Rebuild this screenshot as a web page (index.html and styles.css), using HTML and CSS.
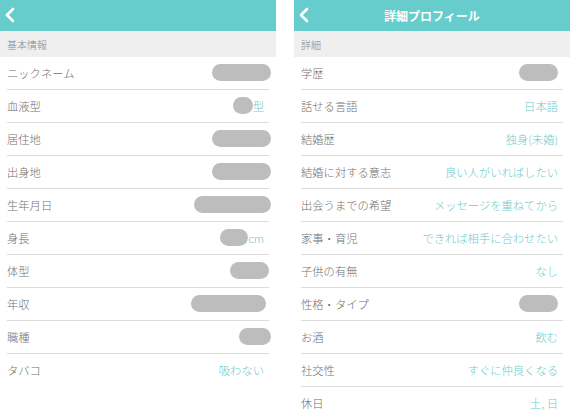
FILE: index.html
```html
<!DOCTYPE html>
<html lang="ja">
<head>
<meta charset="utf-8">
<link rel="stylesheet" href="styles.css">
</head>
<body>
<div class="screens">
  <section class="panel">
    <header class="bar">
      <svg class="back" width="12" height="16" viewBox="0 0 12 16"><polyline points="9,2 3,8 9,14" fill="none" stroke="#fff" stroke-width="2.6" stroke-linecap="round" stroke-linejoin="round"/></svg>
    </header>
    <div class="section">基本情報</div>
    <ul class="list">
      <li class="row"><span class="label">ニックネーム</span><span class="value"><i class="pill out" style="width:59px"></i></span></li>
      <li class="row"><span class="label">血液型</span><span class="value"><i class="pill" style="width:20px"></i>型</span></li>
      <li class="row"><span class="label">居住地</span><span class="value"><i class="pill out" style="width:59px"></i></span></li>
      <li class="row"><span class="label">出身地</span><span class="value"><i class="pill out" style="width:59px"></i></span></li>
      <li class="row"><span class="label">生年月日</span><span class="value"><i class="pill out" style="width:77px"></i></span></li>
      <li class="row"><span class="label">身長</span><span class="value"><i class="pill" style="width:28px"></i>cm</span></li>
      <li class="row"><span class="label">体型</span><span class="value"><i class="pill out4" style="width:39px"></i></span></li>
      <li class="row"><span class="label">年収</span><span class="value"><i class="pill out2" style="width:75px"></i></span></li>
      <li class="row"><span class="label">職種</span><span class="value"><i class="pill out" style="width:32px"></i></span></li>
      <li class="row"><span class="label">タバコ</span><span class="value">吸わない</span></li>
    </ul>
  </section>
  <section class="panel">
    <header class="bar">
      <svg class="back" width="12" height="16" viewBox="0 0 12 16"><polyline points="9,2 3,8 9,14" fill="none" stroke="#fff" stroke-width="2.6" stroke-linecap="round" stroke-linejoin="round"/></svg>
      <h1 class="title">詳細プロフィール</h1>
    </header>
    <div class="section">詳細</div>
    <ul class="list">
      <li class="row"><span class="label">学歴</span><span class="value"><i class="pill" style="width:39px"></i></span></li>
      <li class="row"><span class="label">話せる言語</span><span class="value">日本語</span></li>
      <li class="row"><span class="label">結婚歴</span><span class="value">独身(未婚)</span></li>
      <li class="row"><span class="label">結婚に対する意志</span><span class="value">良い人がいればしたい</span></li>
      <li class="row"><span class="label">出会うまでの希望</span><span class="value">メッセージを重ねてから</span></li>
      <li class="row"><span class="label">家事・育児</span><span class="value">できれば相手に合わせたい</span></li>
      <li class="row"><span class="label">子供の有無</span><span class="value">なし</span></li>
      <li class="row"><span class="label">性格・タイプ</span><span class="value"><i class="pill" style="width:39px"></i></span></li>
      <li class="row"><span class="label">お酒</span><span class="value">飲む</span></li>
      <li class="row"><span class="label">社交性</span><span class="value">すぐに仲良くなる</span></li>
      <li class="row"><span class="label">休日</span><span class="value">土, 日</span></li>
    </ul>
  </section>
</div>
</body>
</html>
```
FILE: styles.css
```css
* { box-sizing: border-box; }
html, body {
  margin: 0;
  padding: 0;
  background: #fff;
  font-family: "Noto Sans CJK JP", "Noto Sans", sans-serif;
}
.screens {
  display: flex;
  gap: 18px;
  width: 570px;
  height: 414px;
  overflow: hidden;
}
.panel {
  width: 276px;
  flex: none;
  background: #fff;
}
.bar {
  position: relative;
  height: 31px;
  background: #66cdcc;
  display: flex;
  align-items: center;
  justify-content: center;
}
.back {
  position: absolute;
  left: 4px;
  top: 7px;
}
.title {
  margin: 0;
  color: #fff;
  font-size: 12px;
  font-weight: bold;
}
.section {
  height: 26px;
  background: #efefef;
  color: #8a8a8a;
  font-size: 10px;
  font-weight: 300;
  padding-left: 7px;
  display: flex;
  align-items: center;
}
.list {
  list-style: none;
  margin: 0;
  padding: 0 7px;
}
.row {
  height: 33px;
  border-bottom: 1px solid #dcdcdc;
  display: flex;
  align-items: center;
  justify-content: space-between;
  font-size: 11.3px;
  font-weight: 300;
  padding-bottom: 1px;
}
.row:last-child { border-bottom: none; }
.label { color: #707070; }
.value {
  color: #6ccbcb;
  padding-right: 5px;
  display: flex;
  align-items: center;
}
.pill {
  display: inline-block;
  height: 17px;
  border-radius: 9px;
  background: #bdbdbd;
}
.pill.out { margin-right: -7px; }
.pill.out4 { margin-right: -5px; }
.pill.out2 { margin-right: -2px; }
```
